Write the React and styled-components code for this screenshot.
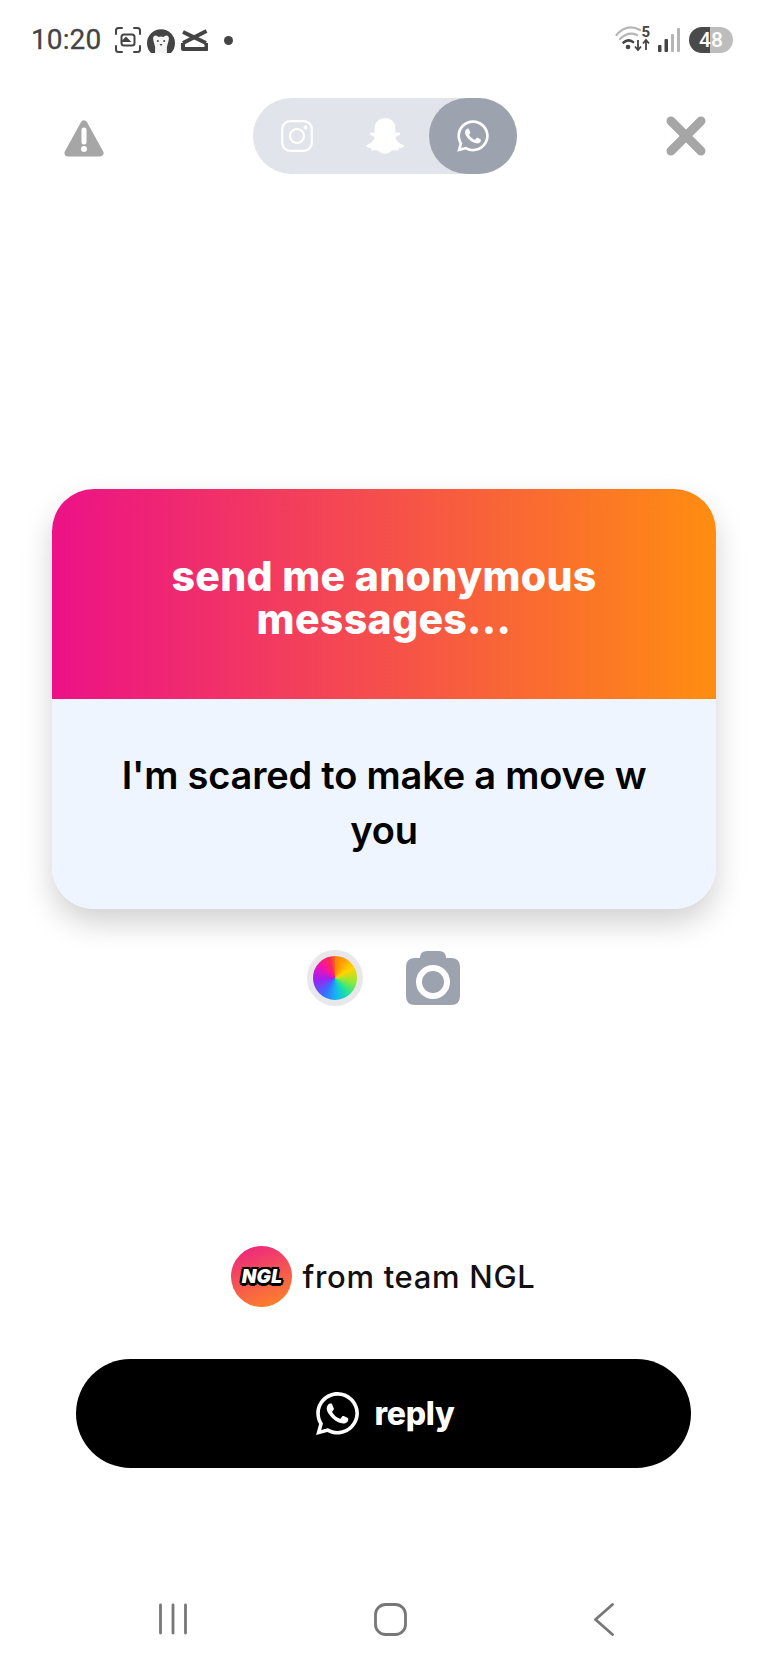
import React from "react";
import styled, { createGlobalStyle } from "styled-components";
import { FaWhatsapp, FaSnapchatGhost } from "react-icons/fa";

const Global = createGlobalStyle`
  html, body { margin: 0; padding: 0; background: #fff; }
  * { box-sizing: border-box; }
`;

const Page = styled.div`
  width: 768px;
  height: 1664px;
  background: #fff;
  display: flex;
  flex-direction: column;
  overflow: hidden;
  font-family: Inter, "Liberation Sans", sans-serif;
`;

const StatusBar = styled.div`
  height: 98px;
  padding: 26px 35px 0 31px;
  display: flex;
  justify-content: space-between;
  align-items: flex-start;
  color: #444;
`;

const StatusGroup = styled.div`
  display: flex;
  align-items: center;
  height: 28px;
`;

const Clock = styled.span`
  font-family: Roboto, sans-serif;
  font-size: 28px;
  line-height: 28px;
  width: 84px;
  letter-spacing: 0.1px;
  color: #444;
  -webkit-text-stroke: 0.3px #444;
`;

const Dot = styled.span`
  width: 9px;
  height: 9px;
  border-radius: 50%;
  background: #444;
  margin-left: 16px;
`;

const WifiWrap = styled.div`
  position: relative;
  width: 35px;
  height: 28px;
  margin-right: 8px;
`;

const WifiNum = styled.span`
  position: absolute;
  right: 0;
  top: -1px;
  font-family: Roboto, sans-serif;
  font-size: 15px;
  line-height: 15px;
  font-weight: 700;
  color: #444;
`;

const Battery = styled.div`
  width: 44px;
  height: 26px;
  border-radius: 13px;
  margin-left: 9px;
  background: linear-gradient(90deg, #4a4a4a 0 47%, #bdbdbd 47% 100%);
  color: #fff;
  font-family: Roboto, sans-serif;
  font-weight: 500;
  font-size: 21px;
  line-height: 26px;
  text-align: center;
`;

const TopRow = styled.div`
  height: 76px;
  padding: 0 62px 0 64px;
  display: flex;
  align-items: center;
  justify-content: space-between;
`;

const Warning = styled.svg`
  width: 40px;
  height: 38px;
  margin-top: 6px;
`;

const Tabs = styled.div`
  width: 264px;
  height: 76px;
  margin-left: -1px;
  border-radius: 38px;
  background: #e1e4ea;
  display: flex;
`;

const Tab = styled.div`
  flex: 0 0 88px;
  height: 76px;
  border-radius: 38px;
  display: flex;
  align-items: center;
  justify-content: center;
  color: #fff;
  background: ${(p) => (p.$active ? "#9ca3af" : "transparent")};
`;

const Card = styled.div`
  width: 664px;
  margin: 315px 0 0 52px;
  border-radius: 42px;
  overflow: hidden;
  box-shadow: 0 14px 30px rgba(0, 0, 0, 0.18);
`;

const CardHead = styled.div`
  height: 210px;
  background: linear-gradient(90deg, #ec1187 0%, #ff8d10 100%);
  display: flex;
  align-items: center;
  justify-content: center;
  padding-top: 8px;
  text-align: center;
  color: #fff;
  font-weight: 800;
  font-size: 41px;
  line-height: 43px;
  letter-spacing: 0.3px;
`;

const CardBody = styled.div`
  height: 210px;
  background: #eff5fe;
  display: flex;
  align-items: center;
  justify-content: center;
  text-align: center;
  color: #000;
  font-weight: 600;
  font-size: 38px;
  line-height: 55px;
  letter-spacing: -0.2px;
  padding: 0 60px 2px;
`;

const Tools = styled.div`
  display: flex;
  align-items: center;
  justify-content: center;
  gap: 42px;
  margin: 41px 0 0 -1px;
  height: 56px;
`;

const Wheel = styled.div`
  width: 56px;
  height: 56px;
  border-radius: 50%;
  border: 6px solid #e8e8ea;
  background: conic-gradient(#ff8a00 10deg, #ffd400 60deg, #8de83c 105deg, #1fe39a 140deg, #12b8f0 175deg, #3a6cff 215deg, #a020f0 265deg, #f012b0 310deg, #ff2a50 345deg, #ff8a00 370deg);
`;

const Credit = styled.div`
  display: flex;
  align-items: center;
  justify-content: center;
  gap: 10px;
  margin: 239px 0 0 0;
  height: 62px;
  padding-right: 1px;
  color: #111;
  font-weight: 500;
  font-size: 31px;
  letter-spacing: 0.7px;
`;

const Badge = styled.div`
  width: 61px;
  height: 61px;
  border-radius: 50%;
  background: linear-gradient(160deg, #ec1f87, #ff8a20);
  display: flex;
  align-items: center;
  justify-content: center;
`;

const BadgeText = styled.span`
  font-family: Inter, sans-serif;
  font-weight: 900;
  font-style: italic;
  font-size: 19px;
  letter-spacing: 0.2px;
  color: #fff;
  text-shadow: 2.5px 0 #000, -2.5px 0 #000, 0 2.5px #000, 0 -2.5px #000, 1.8px 1.8px #000, -1.8px 1.8px #000, 1.8px -1.8px #000, -1.8px -1.8px #000;
`;

const ReplyButton = styled.div`
  width: 615px;
  height: 109px;
  margin: 52px 0 0 76px;
  border-radius: 55px;
  background: #000;
  color: #fff;
  display: flex;
  align-items: center;
  justify-content: center;
  gap: 13px;
  font-weight: 800;
  font-size: 32px;
  letter-spacing: -0.3px;
`;

const NavBar = styled.div`
  margin-top: 134px;
  height: 34px;
  padding: 0 154px 0 159px;
  display: flex;
  align-items: center;
  justify-content: space-between;
`;

const Spacer = styled.span`
  width: ${(p) => p.$w}px;
`;

const WarningIcon = () => (
  <Warning viewBox="0 0 40 38">
    <path d="M20 4 L36 33 H4 Z" fill="#a6a6a6" stroke="#a6a6a6" strokeWidth="7" strokeLinejoin="round" />
    <path d="M20 10v12" stroke="#fff" strokeWidth="5" strokeLinecap="round" />
    <circle cx="20" cy="29" r="3" fill="#fff" />
  </Warning>
);

const Close = () => (
  <svg width="40" height="40" viewBox="0 0 40 40">
    <path d="M5 5 L35 35 M35 5 L5 35" stroke="#a6a6a6" strokeWidth="9" strokeLinecap="round" />
  </svg>
);

const InstaIcon = () => (
  <svg width="32" height="32" viewBox="0 0 32 32" fill="none" stroke="#fff" strokeWidth="2.2">
    <rect x="1.2" y="1.2" width="29.6" height="29.6" rx="8" />
    <circle cx="16" cy="16" r="7" />
    <circle cx="24.5" cy="7.5" r="1.9" fill="#fff" stroke="none" />
  </svg>
);

const Camera = () => (
  <svg width="56" height="56" viewBox="0 0 56 56">
    <path d="M15 8 Q15 1 22 1 H34 Q41 1 41 8 H46 Q55 8 55 17 V46 Q55 55 46 55 H10 Q1 55 1 46 V17 Q1 8 10 8 Z" fill="#9ca3af" />
    <circle cx="28" cy="32" r="14" fill="none" stroke="#fff" strokeWidth="6" />
  </svg>
);

const Screenshot = () => (
  <svg width="26" height="26" viewBox="0 0 26 26" fill="none" stroke="#444" strokeWidth="2" strokeLinecap="round">
    <path d="M1 7V3.5Q1 1 3.5 1H7M19 1h3.5Q25 1 25 3.5V7M25 19v3.5Q25 25 22.500 25H19M7 25H3.500Q1 25 1 22.500V19" />
    <rect x="6.500" y="7.500" width="13" height="11" rx="2.500" strokeWidth="2" />
    <path d="M8 14l3-3 3 3z" fill="#444" />
  </svg>
);

const Bear = () => (
  <svg width="28" height="27" viewBox="0 0 28 27">
    <path d="M4 26 A14 14 0 1 1 24 26 Z" fill="#444" />
    <path d="M8 26 Q9 20 6.500 14 Q5 9 8.500 8.500 Q10.500 8.500 11.500 10 Q14 9 16.500 10 Q17.500 8.500 19.500 8.500 Q23 9 21.500 14 Q19 20 20 26 Z" fill="#f4f4f4" />
    <circle cx="10.800" cy="14" r="1" fill="#444" />
    <circle cx="17.200" cy="14" r="1" fill="#444" />
    <path d="M12.500 17h3l-1.500 2z" fill="#444" />
  </svg>
);

const Capcut = () => (
  <svg width="27" height="22" viewBox="0 0 27 22" fill="none" stroke="#444" strokeWidth="4" strokeLinejoin="round">
    <path d="M2 3 L25 14 M25.500 2 L2 14" />
    <path d="M2 14 V20 H25.500 V14" />
  </svg>
);

const Wifi = () => (
  <svg width="35" height="25" viewBox="0 0 35 25" fill="none" strokeLinecap="round">
    <path d="M1.500 9 Q12 -3 25 4" stroke="#b5b5b5" strokeWidth="2.200" />
    <path d="M5 13 Q13 5 22 9" stroke="#b5b5b5" strokeWidth="2.200" />
    <path d="M8.500 16.500 Q13 12.500 18 16" stroke="#444" strokeWidth="2.600" />
    <circle cx="13" cy="21" r="2.300" fill="#444" />
    <path d="M23 14v10M20 20.500l3 3.500 3-3.500" stroke="#444" strokeWidth="1.800" strokeLinecap="butt" />
    <path d="M31 24V14M28 17.500l3-3.500 3 3.500" stroke="#444" strokeWidth="1.800" strokeLinecap="butt" />
  </svg>
);

const Signal = () => (
  <svg width="22" height="24" viewBox="0 0 22 24">
    <rect x="0" y="17" width="3.500" height="7" rx="1" fill="#444" />
    <rect x="6.500" y="11" width="3.500" height="13" rx="1" fill="#444" />
    <rect x="13" y="6" width="3" height="18" rx="1" fill="#b5b5b5" />
    <rect x="19" y="0" width="3" height="24" rx="1" fill="#b5b5b5" />
  </svg>
);

const NavLines = () => (
  <svg width="28" height="32" viewBox="0 0 28 32" stroke="#777" strokeWidth="2.800" strokeLinecap="round">
    <path d="M1.500 2v28M14 2v28M26.500 2v28" />
  </svg>
);

const NavHome = () => (
  <svg width="33" height="33" viewBox="0 0 33 33" fill="none" stroke="#777" strokeWidth="2.800">
    <rect x="1.500" y="1.500" width="30" height="30" rx="10" />
  </svg>
);

const NavBack = () => (
  <svg width="20" height="33" viewBox="0 0 20 33" fill="none" stroke="#777" strokeWidth="2.800" strokeLinecap="round" strokeLinejoin="round">
    <path d="M18.500 1.500 L1.500 16.500 L18.500 31.500" />
  </svg>
);

export default function App() {
  return (
    <Page>
      <Global />
      <StatusBar>
        <StatusGroup>
          <Clock>10:20</Clock>
          <Screenshot />
          <Spacer $w={6} />
          <Bear />
          <Spacer $w={6} />
          <Capcut />
          <Dot />
        </StatusGroup>
        <StatusGroup>
          <WifiWrap>
            <Wifi />
            <WifiNum>5</WifiNum>
          </WifiWrap>
          <Signal />
          <Battery>48</Battery>
        </StatusGroup>
      </StatusBar>
      <TopRow>
        <WarningIcon />
        <Tabs>
          <Tab><InstaIcon /></Tab>
          <Tab><FaSnapchatGhost size={38} /></Tab>
          <Tab $active><FaWhatsapp size={36} /></Tab>
        </Tabs>
        <Close />
      </TopRow>
      <Card>
        <CardHead>send me anonymous<br />messages...</CardHead>
        <CardBody>I'm scared to make a move w you</CardBody>
      </Card>
      <Tools>
        <Wheel />
        <Camera />
      </Tools>
      <Credit>
        <Badge><BadgeText>NGL</BadgeText></Badge>
        from team NGL
      </Credit>
      <ReplyButton>
        <FaWhatsapp size={49} />
        reply
      </ReplyButton>
      <NavBar>
        <NavLines />
        <NavHome />
        <NavBack />
      </NavBar>
    </Page>
  );
}
